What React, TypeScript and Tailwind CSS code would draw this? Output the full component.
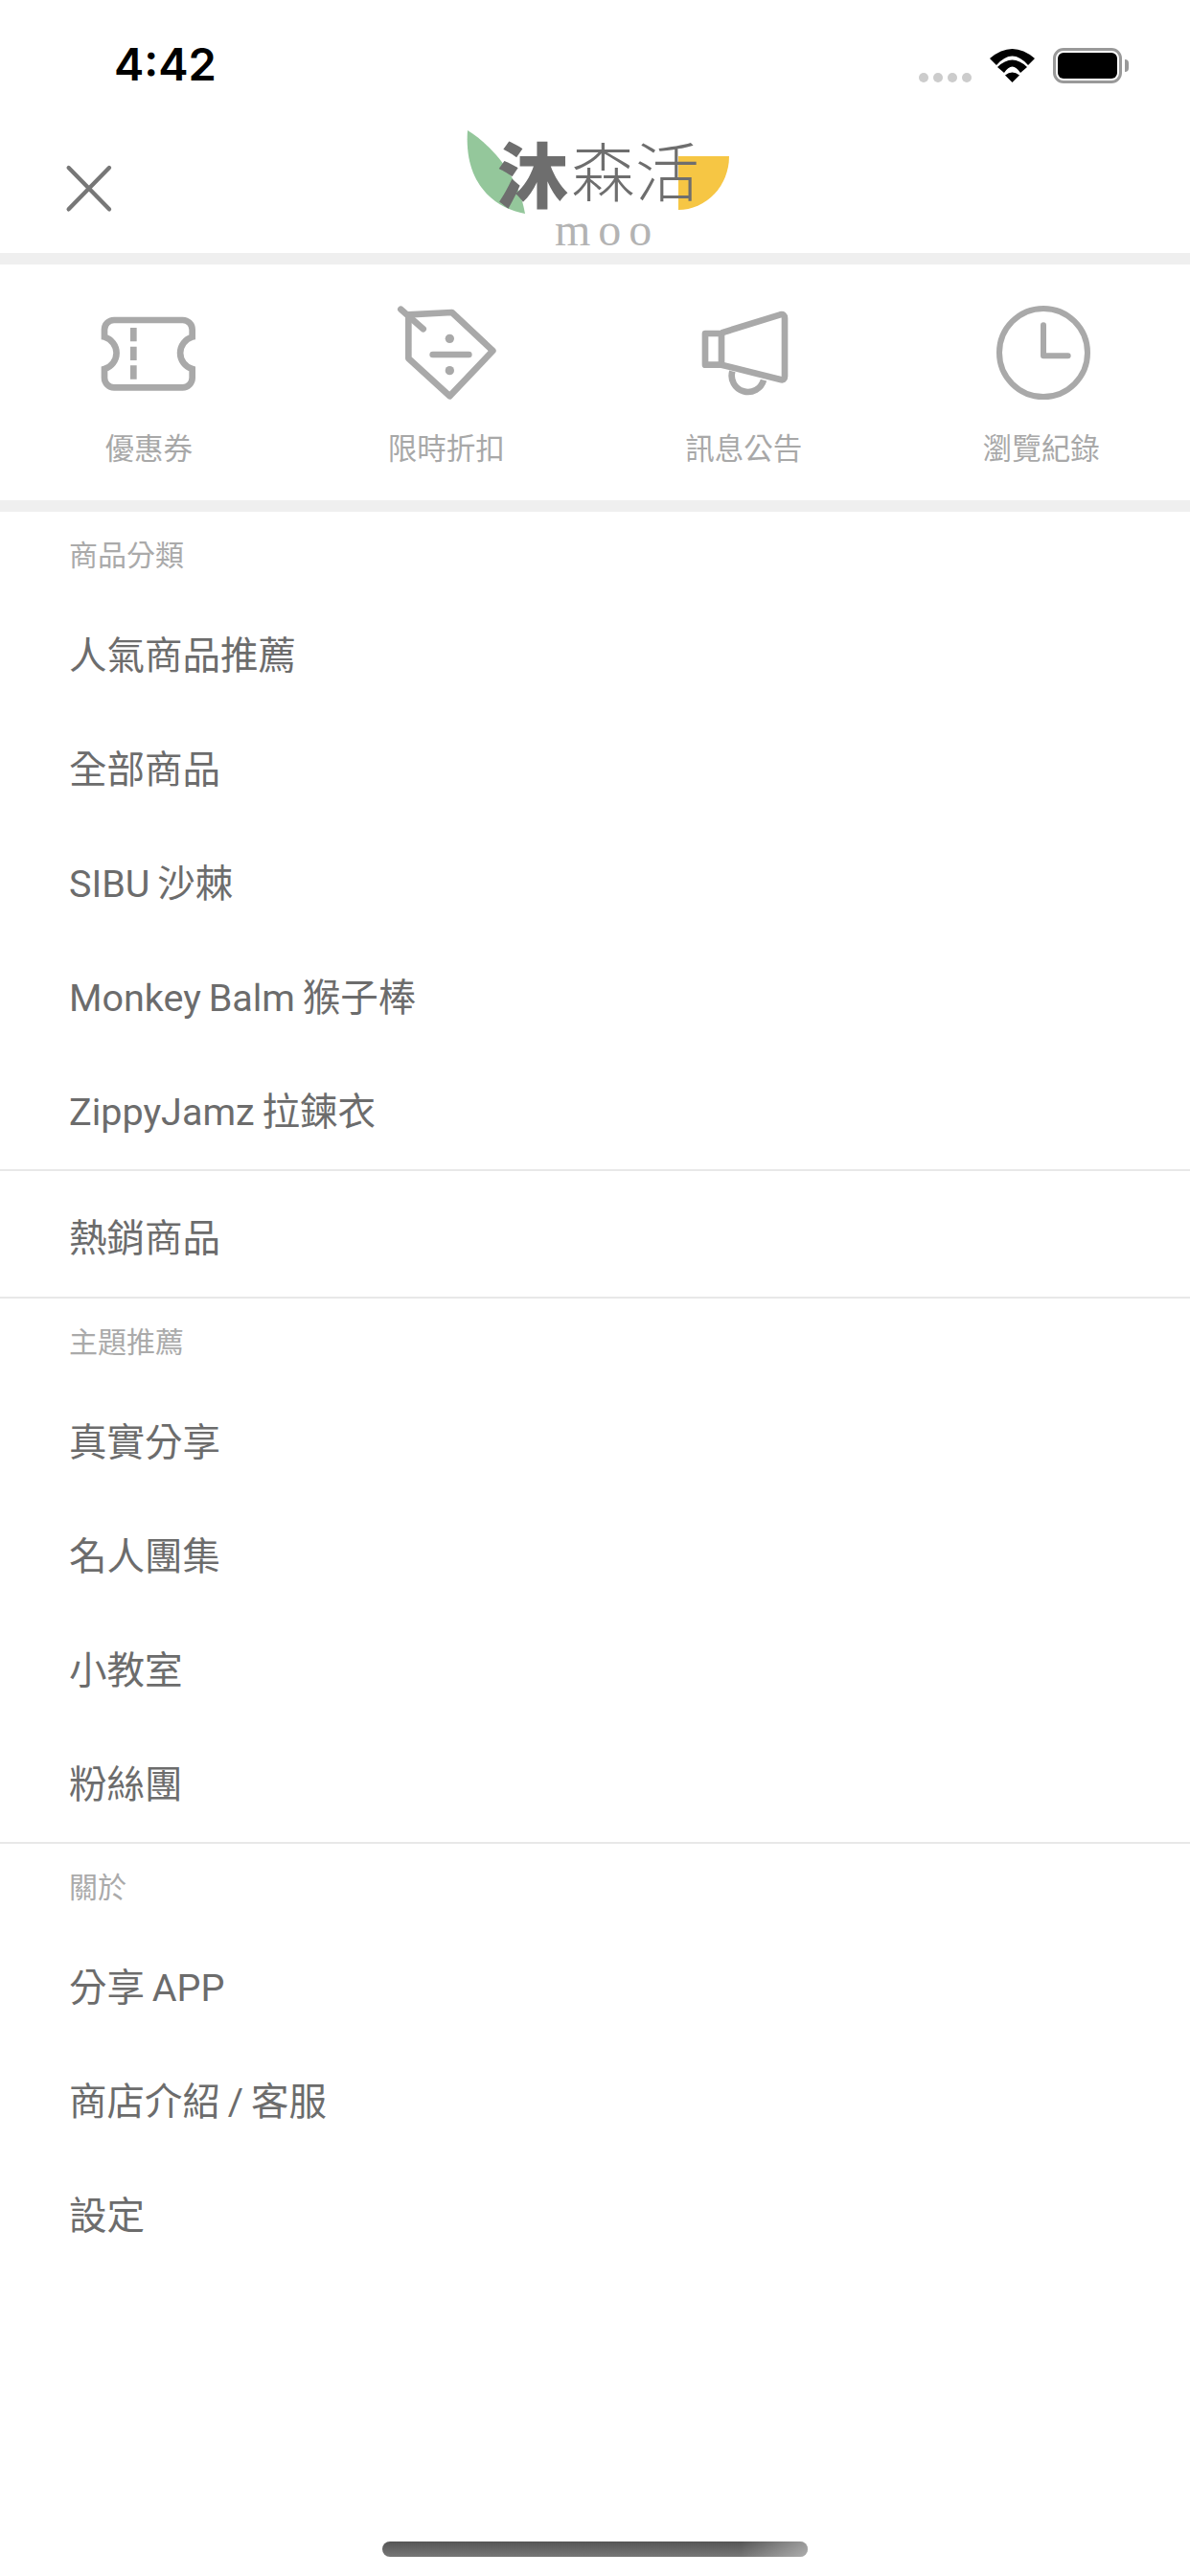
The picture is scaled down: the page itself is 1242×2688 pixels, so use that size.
const shortcuts = [
  { label: "優惠券", icon: <CouponIcon /> },
  { label: "限時折扣", icon: <TagIcon /> },
  { label: "訊息公告", icon: <MegaphoneIcon /> },
  { label: "瀏覽紀錄", icon: <ClockIcon /> },
];

const groups: { title?: string; items: string[]; single?: boolean }[] = [
  { title: "商品分類", items: ["人氣商品推薦", "全部商品", "SIBU 沙棘", "Monkey Balm 猴子棒", "ZippyJamz 拉鍊衣"] },
  { items: ["熱銷商品"], single: true },
  { title: "主題推薦", items: ["真實分享", "名人團集", "小教室", "粉絲團"] },
  { title: "關於", items: ["分享 APP", "商店介紹 / 客服", "設定"] },
];

function CouponIcon() {
  return (
    <svg viewBox="0 0 390 360" className="w-[130px] h-[120px]" fill="none" stroke="#a9a9a9" strokeWidth="20">
      <path d="M87 72H302A30 30 0 0 1 332 102V125A52 52 0 0 0 332 225V253A30 30 0 0 1 302 283H87A30 30 0 0 1 57 253V225A52 52 0 0 0 57 125V102A30 30 0 0 1 87 72Z" />
      <path d="M148 96V258" strokeDasharray="43 16" />
    </svg>
  );
}

function TagIcon() {
  return (
    <svg viewBox="0 0 390 360" className="w-[130px] h-[120px]" fill="none" stroke="#a9a9a9" strokeWidth="20" strokeLinecap="round" strokeLinejoin="round">
      <path d="M76 55L212 48L340 168L205 310L76 192Z" />
      <path d="M52 38L122 100" />
      <path d="M152 180H265" />
      <circle cx="205" cy="130" r="14" fill="#a9a9a9" stroke="none" />
      <circle cx="205" cy="230" r="14" fill="#a9a9a9" stroke="none" />
    </svg>
  );
}

function MegaphoneIcon() {
  return (
    <svg viewBox="-18 0 390 360" className="w-[130px] h-[120px]" fill="none" stroke="#a9a9a9" strokeWidth="20" strokeLinejoin="round">
      <path d="M57 114H108V212H57Z" />
      <path d="M108 112L292 55Q306 52 306 66V248Q306 262 292 258L108 212" />
      <path d="M142 232A50 50 0 0 0 240 260" />
    </svg>
  );
}

function ClockIcon() {
  return (
    <svg viewBox="-6 0 390 360" className="w-[130px] h-[120px]" fill="none" stroke="#a9a9a9" strokeWidth="18" strokeLinecap="round" strokeLinejoin="round">
      <circle cx="195" cy="174" r="138" />
      <path d="M195 88V184H272" />
    </svg>
  );
}

function CloseIcon() {
  return (
    <svg viewBox="0 0 270 270" className="w-[90px] h-[90px]" fill="none" stroke="#777777" strokeWidth="13" strokeLinecap="round">
      <path d="M65 75L192 205" />
      <path d="M192 75L65 205" />
    </svg>
  );
}

function WifiIcon() {
  return (
    <svg viewBox="0 0 47 35" className="w-[47px] h-[35px]" fill="#000000">
      <path d="M0 10Q23.5 -10 47 10L40 17Q23.5 -2 7 17Z" />
      <path d="M8 19Q23.5 4 39 19L32 25Q23.5 12 15 25Z" />
      <path d="M16 27.5Q23.5 21.5 31 27.5L23.5 35Z" />
    </svg>
  );
}

function StatusBar() {
  return (
    <div className="h-[132px] flex items-end justify-between pl-[119px] pr-[71px] pb-[46px]">
      <span className="-mb-[4px] text-[47px] leading-[47px] font-semibold text-black">4:42</span>
      <div className="flex items-end">
        <div className="flex gap-[5px] mr-[19px]">
          {[0, 1, 2, 3].map((i) => (
            <div key={i} className="w-[10px] h-[10px] rounded-full bg-[#cccccc]" />
          ))}
        </div>
        <WifiIcon />
        <div className="relative ml-[19px] w-[72px] h-[37px] border-[3px] border-[#999999] rounded-[11px] p-[2px] -mb-[1px]">
          <div className="w-full h-full bg-black rounded-[6px]" />
          <div className="absolute -right-[10px] top-[9px] w-[4px] h-[13px] bg-[#999999] rounded-r-full" />
        </div>
      </div>
    </div>
  );
}

function Logo() {
  return (
    <div className="relative w-[280px] h-[132px]">
      <svg viewBox="0 0 280 132" className="absolute inset-0 w-[280px] h-[132px]">
        <path d="M7 4C30 18 60 50 67 91C35 85 3 60 7 4Z" fill="#94c79b" />
        <path d="M227 31H280A53 56 0 0 1 227 87Z" fill="#f6c644" />
      </svg>
      <span className="absolute left-[38px] top-[15px] text-[74px] leading-[74px] font-black text-[#6e6e6e]">沐</span>
      <span className="absolute left-[115px] top-[15px] text-[67px] leading-[67px] font-light text-[#6e6e6e] whitespace-nowrap">森活</span>
      <span className="absolute left-[98px] top-[90px] text-[48px] leading-[36px] tracking-[8px] text-[#b3b3b3] font-['Liberation_Serif',serif]">moo</span>
    </div>
  );
}

export default function App() {
  return (
    <div className="w-full h-[2688px] bg-white flex flex-col overflow-hidden font-['Inter','Noto_Sans_CJK_TC',sans-serif]">
      <StatusBar />

      <div className="h-[132px] grid grid-cols-[1fr_auto_1fr]">
        <div className="pl-[50px] pt-[18px]">
          <CloseIcon />
        </div>
        <Logo />
      </div>
      <div className="h-[12px] bg-[#efefef]" />

      <div className="h-[246px] grid grid-cols-4">
        {shortcuts.map((s) => (
          <div key={s.label} className="flex flex-col items-center pt-[34px]">
            {s.icon}
            <span className="mt-[18px] text-[30.5px] leading-[40px] text-[#a8a8a8]">{s.label}</span>
          </div>
        ))}
      </div>
      <div className="h-[12px] bg-[#efefef]" />

      {groups.map((g, idx) => (
        <div key={idx} className={idx > 0 ? "border-t-2 border-[#e8e8e8]" : ""}>
          {g.title && (
            <div className="h-[91px] pt-[25px] pl-[72px] text-[30px] leading-[40px] text-[#aaaaaa]">{g.title}</div>
          )}
          {g.items.map((item) => (
            <div
              key={item}
              className={`flex items-center pl-[72px] text-[39.5px] text-[#6c6c6c] font-['Roboto','Noto_Sans_CJK_TC',sans-serif] [word-spacing:-2px] ${g.single ? "h-[131px] pt-[10px]" : "h-[119px]"}`}
            >
              {item}
            </div>
          ))}
        </div>
      ))}

      <div className="relative mt-auto mb-[20px] self-center w-[444px] h-[16px] rounded-full overflow-hidden bg-gradient-to-b from-[#555555] to-[#777777]">
        <div className="absolute right-0 top-0 h-full w-[70px] bg-gradient-to-r from-transparent to-white/40" />
      </div>
    </div>
  );
}
